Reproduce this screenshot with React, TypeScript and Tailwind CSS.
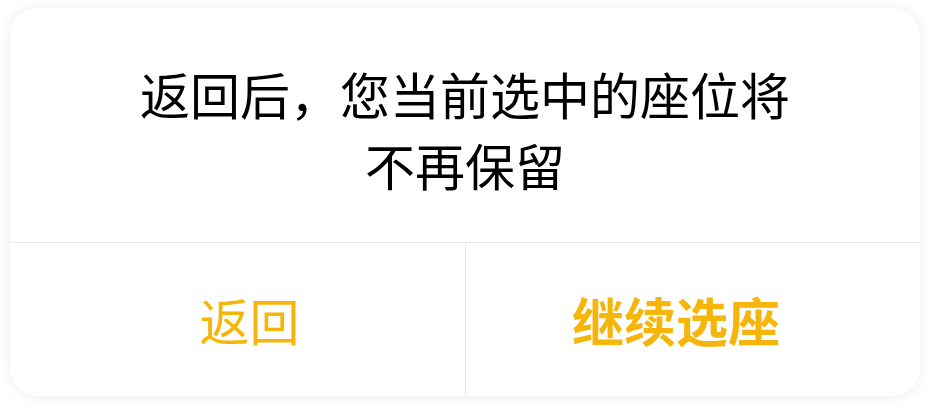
import React from "react";

const cjk = { fontFamily: '"Noto Sans CJK SC", "Noto Sans", sans-serif' };

function ConfirmDialog() {
  return (
    <div className="flex h-[388px] w-[910px] flex-col overflow-hidden rounded-[28px] bg-white shadow-[0_0_14px_rgba(0,0,0,0.08)]">
      <div className="h-[235px] border-b border-[#e8e8e8] pt-[50px]">
        <p className="mx-auto w-[770px] text-center text-[50px] leading-[71px] text-black">
          返回后，您当前选中的座位将
          <br />
          不再保留
        </p>
      </div>
      <div className="flex flex-1">
        <button className="flex w-[456px] shrink-0 items-center justify-center border-r border-[#e8e8e8] pl-[24px] text-[50px] text-[#f5b50b]">
          返回
        </button>
        <button className="flex flex-1 items-center justify-center pr-[34px] text-[52px] font-bold text-[#f5b50b]">
          继续选座
        </button>
      </div>
    </div>
  );
}

export default function App() {
  return (
    <div className="h-[410px] w-[932px] bg-white pl-[10px] pt-[8px]" style={cjk}>
      <ConfirmDialog />
    </div>
  );
}
